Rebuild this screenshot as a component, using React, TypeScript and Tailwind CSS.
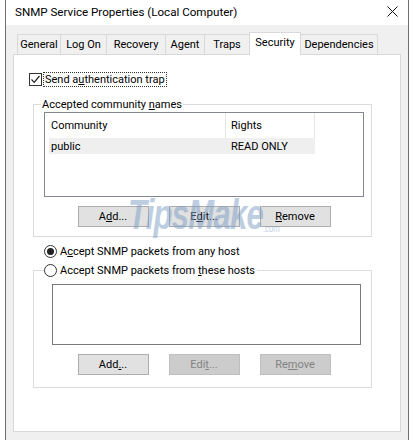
import React from 'react';

const tabs = [
  { label: 'General', w: 'w-[44px]' },
  { label: 'Log On', w: 'w-[47px]' },
  { label: 'Recovery', w: 'w-[60px]' },
  { label: 'Agent', w: 'w-[40px]' },
  { label: 'Traps', w: 'w-[46px]' },
];

const Btn = ({ children, disabled = false }: { children: React.ReactNode; disabled?: boolean }) => (
  <div
    className={
      disabled
        ? 'w-[71px] h-[21px] flex items-center justify-center border border-[#bfbfbf] bg-[#cccccc] text-[#838383]'
        : 'w-[71px] h-[21px] flex items-center justify-center border border-[#adadad] bg-[#e1e1e1] text-black'
    }
  >
    {children}
  </div>
);

const App = () => {
  return (
    <div
      className="relative w-[413px] h-[440px] overflow-hidden bg-white text-[11px] leading-[15px] text-black"
      style={{ fontFamily: 'Roboto, "Segoe UI", sans-serif' }}
    >
      <div className="ml-[5px] w-[404px] h-[440px] border-x border-[#6e6e6e] flex flex-col">
        {/* Title bar */}
        <div className="h-[25px] bg-white flex items-center justify-between pl-[9px] pr-[10px]">
          <span className="text-[11.6px]">SNMP Service Properties (Local Computer)</span>
          <svg width="11" height="11" viewBox="0 0 11 11" className="mt-[-2px]">
            <path d="M0.5 0.5 L10.5 10.5 M10.5 0.5 L0.5 10.5" stroke="#111" strokeWidth="1" fill="none" />
          </svg>
        </div>

        {/* Client area */}
        <div className="flex-1 bg-[#f0f0f0] px-[7px] pt-[7px] pb-[8px] flex flex-col">
          {/* Tabs */}
          <div className="flex items-end h-[22px] pl-[4px] relative z-10">
            {tabs.map((t) => (
              <div
                key={t.label}
                className={`${t.w} h-[20px] border border-b-0 border-[#d9d9d9] -ml-px first:ml-0 flex items-center justify-center bg-[#f0f0f0]`}
              >
                {t.label}
              </div>
            ))}
            <div className="w-[52px] h-[23px] -mb-px border border-b-0 border-[#d9d9d9] -ml-px flex items-center justify-center bg-white pb-[3px]">
              Security
            </div>
            <div className="w-[78px] h-[20px] border border-b-0 border-[#d9d9d9] -ml-px flex items-center justify-center bg-[#f0f0f0]">
              Dependencies
            </div>
          </div>

          {/* Panel */}
          <div className="flex-1 bg-white border border-[#d9d9d9] pt-[17px]">
            {/* Checkbox */}
            <div className="flex items-center pl-[15px] h-[15px]">
              <div className="w-[13px] h-[13px] border border-[#333] flex items-center justify-center">
                <svg width="11" height="11" viewBox="0 0 11 11">
                  <path d="M1.5 5.5 L4.2 8.3 L9.5 2" stroke="#222" strokeWidth="1.2" fill="none" />
                </svg>
              </div>
              <span className="ml-[1px] px-[1px] border border-dotted border-[#333] leading-[13px]">
                Send a<span className="underline">u</span>thentication trap
              </span>
            </div>

            {/* Group box 1 */}
            <fieldset className="ml-[19px] mt-[10px] w-[339px] border border-[#dcdcdc] pl-[10px] pb-[9px]">
              <legend className="px-[1px] -ml-[3px] leading-[15px]">
                Accepted community <span className="underline">n</span>ames
              </legend>
              <div className="w-[320px] h-[85px] border border-[#828790] bg-white pl-[4px] pt-0">
                <div className="flex h-[25px] items-center">
                  <div className="w-[177px] h-full flex items-center pl-[2px] border-r border-[#e5e5e5]">Community</div>
                  <div className="w-[89px] h-full flex items-center pl-[5px] border-r border-[#e5e5e5]">Rights</div>
                </div>
                <div className="flex h-[16px] items-center w-[266px] bg-[#efefef]">
                  <div className="w-[177px] pl-[2px]">public</div>
                  <div className="pl-[5px]">READ ONLY</div>
                </div>
              </div>
              <div className="w-[320px] mt-[9px] flex justify-center gap-[20px]">
                <Btn>
                  A<span className="underline">d</span>d...
                </Btn>
                <Btn>
                  E<span className="underline">d</span>it...
                </Btn>
                <Btn>
                  <span className="underline">R</span>emove
                </Btn>
              </div>
            </fieldset>

            {/* Radio 1 */}
            <div className="flex items-center pl-[30px] mt-[7px] h-[15px]">
              <div className="w-[13px] h-[13px] rounded-full border border-[#333] flex items-center justify-center">
                <div className="w-[7px] h-[7px] rounded-full bg-[#222]" />
              </div>
              <span className="ml-[3px]">
                A<span className="underline">c</span>cept SNMP packets from any host
              </span>
            </div>

            {/* Group box 2 */}
            <fieldset className="ml-[19px] mt-[4px] w-[339px] border border-[#dcdcdc] pl-[10px] pb-[12px]">
              <legend className="flex items-center leading-[15px] pr-[2px]">
                <div className="w-[13px] h-[13px] rounded-full border border-[#333]" />
                <span className="ml-[3px]">
                  Accept SNMP packets from <span className="underline">t</span>hese hosts
                </span>
              </legend>
              <div className="ml-[8px] mt-[6px] w-[309px] h-[61px] border border-[#7a7a7a] bg-white" />
              <div className="w-[320px] mt-[9px] flex justify-center gap-[20px]">
                <Btn>
                  Add<span className="underline">.</span>..
                </Btn>
                <Btn disabled>
                  Edi<span className="underline">t</span>...
                </Btn>
                <Btn disabled>
                  Re<span className="underline">m</span>ove
                </Btn>
              </div>
            </fieldset>
          </div>
        </div>
      </div>

      {/* Watermark */}
      <div className="absolute left-[128px] top-[194px] pointer-events-none select-none flex items-end opacity-50 origin-left scale-x-[0.74]">
        <span
          className="text-[42px] font-bold italic leading-[42px] tracking-[-1px] text-[#7f9fc6]"
          style={{ fontFamily: '"Liberation Sans", Arial, sans-serif' }}
        >
          TipsMake
        </span>
        <span className="text-[10px] leading-[14px] text-[#7f9fc6]">.com</span>
      </div>
    </div>
  );
};

export default App;
